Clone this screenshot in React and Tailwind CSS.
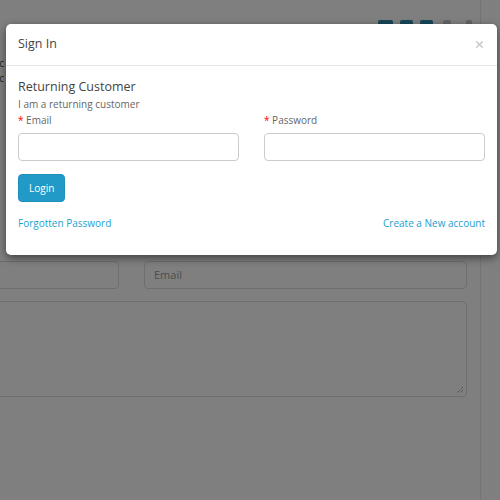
import { X } from 'lucide-react'

function BackgroundPage() {
  return (
    <div className="w-[481px] h-[500px] border-r border-[#e8e8e8] font-['Open_Sans',sans-serif] text-[10px] text-[#666]">
      <div className="flex justify-end gap-[7px] pt-[20px] pr-[8px] h-[36px]">
        <span className="w-[15px] h-[12px] rounded-[2px] bg-[#2f8fb0]" />
        <span className="w-[13px] h-[12px] rounded-[2px] bg-[#2f8fb0]" />
        <span className="w-[13px] h-[12px] rounded-[2px] bg-[#2f8fb0]" />
        <span className="w-[8px] h-[12px] rounded-[2px] bg-[#c4cacc] ml-[3px]" />
        <span className="w-[6px] h-[12px] rounded-[2px] bg-[#c4cacc] ml-[8px]" />
      </div>
      <div className="ml-[-196px] w-[200px] text-right leading-[15px] pt-[20px] text-[#444]">
        <p>Contact c</p>
        <p>Address c</p>
      </div>
      <div className="flex gap-[25px] mt-[175px] ml-[-180px] w-[647px]">
        <div className="w-[299px] h-[28px] border border-[#ddd] rounded-[4px]" />
        <div className="flex-1 h-[28px] border border-[#ddd] rounded-[4px] px-[9px] flex items-center text-[#999] text-[11px]">Email</div>
      </div>
      <div className="mt-[12px] ml-[-180px] w-[647px] h-[96px] border border-[#ddd] rounded-[4px] relative">
        <svg className="absolute right-[2px] bottom-[2px]" width="8" height="8" viewBox="0 0 8 8">
          <path d="M7 1 L1 7 M7 4 L4 7" stroke="#888" strokeWidth="1" strokeDasharray="1 1" />
        </svg>
      </div>
    </div>
  )
}

export default function App() {
  return (
    <div className="relative w-[500px] h-[500px] overflow-hidden bg-white">
      <BackgroundPage />
      <div className="absolute inset-0 bg-black/50" />
      <div className="absolute left-[6px] top-[24px] w-[491px] bg-white rounded-[5px] shadow-[0_3px_9px_rgba(0,0,0,0.5)] font-['Open_Sans',sans-serif] text-[10px] text-[#666]">
        <div className="flex items-center justify-between pl-[12px] pr-[12px] h-[42px] border-b border-[#e5e5e5]">
          <h4 className="text-[12.5px] text-[#444]">Sign In</h4>
          <X size={11} strokeWidth={3} className="text-[#c8c8c8]" />
        </div>
        <div className="px-[12px] pt-[12px] pb-[23px]">
          <h2 className="text-[12.5px] leading-[18px] text-[#444]">Returning Customer</h2>
          <p className="leading-[16px]">I am a returning customer</p>
          <div className="grid grid-cols-2 gap-[25px]">
            <div>
              <label className="block leading-[16px]"><span className="text-[#f00]">*</span> Email</label>
              <input className="mt-[5px] w-full h-[28px] border border-[#ccc] rounded-[4px] outline-none" />
            </div>
            <div>
              <label className="block leading-[16px]"><span className="text-[#f00]">*</span> Password</label>
              <input type="password" className="mt-[5px] w-full h-[28px] border border-[#ccc] rounded-[4px] outline-none" />
            </div>
          </div>
          <button className="mt-[13px] h-[28px] px-[10px] bg-[#229ac8] border border-[#1f90bb] rounded-[4px] text-white text-[10px]">Login</button>
          <div className="flex justify-between mt-[13px] leading-[17px] text-[#23a1d1]">
            <a>Forgotten Password</a>
            <a>Create a New account</a>
          </div>
        </div>
      </div>
    </div>
  )
}
